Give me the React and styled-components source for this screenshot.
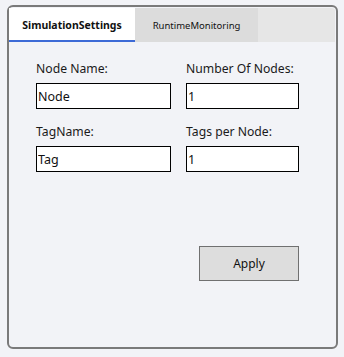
import React, { useState } from 'react';
import styled, { createGlobalStyle } from 'styled-components';

const Global = createGlobalStyle`
  html, body {
    margin: 0;
    padding: 0;
    background: #f2f3f7;
  }
  body {
    font-family: 'Noto Sans', 'Open Sans', sans-serif;
  }
`;

const tabs = ['SimulationSettings', 'RuntimeMonitoring'];

export default function App() {
  const [active, setActive] = useState(0);
  const [form, setForm] = useState({
    nodeName: 'Node',
    nodeCount: '1',
    tagName: 'Tag',
    tagsPerNode: '1',
  });

  const handleChange = (key) => (e) => {
    setForm({ ...form, [key]: e.target.value });
  };

  return (
    <>
      <Global />
      <FRAME>
        <TAB_STRIP>
          {tabs.map((t, i) => (
            <TAB key={t} $active={i === active} onClick={() => setActive(i)}>
              {t}
            </TAB>
          ))}
        </TAB_STRIP>
        <BODY>
          <FIELDS>
            <FIELD>
              <LABEL>Node Name:</LABEL>
              <INPUT value={form.nodeName} onChange={handleChange('nodeName')} />
            </FIELD>
            <FIELD>
              <LABEL>Number Of Nodes:</LABEL>
              <INPUT value={form.nodeCount} onChange={handleChange('nodeCount')} />
            </FIELD>
            <FIELD>
              <LABEL>TagName:</LABEL>
              <INPUT value={form.tagName} onChange={handleChange('tagName')} />
            </FIELD>
            <FIELD>
              <LABEL>Tags per Node:</LABEL>
              <INPUT value={form.tagsPerNode} onChange={handleChange('tagsPerNode')} />
            </FIELD>
          </FIELDS>
          <ACTIONS>
            <BUTTON>Apply</BUTTON>
          </ACTIONS>
        </BODY>
      </FRAME>
    </>
  );
}

const FRAME = styled.div`
  box-sizing: border-box;
  margin: 5px 0 0 7px;
  width: 331px;
  height: 344px;
  border: 2px solid #7a7a7a;
  border-radius: 6px;
  padding: 1px 1px 0 0;
  display: flex;
  flex-direction: column;
`;

const TAB_STRIP = styled.div`
  display: flex;
  height: 34px;
  background: #e6e6e6;
  border-top-right-radius: 3px;
`;

const TAB = styled.div`
  box-sizing: border-box;
  width: ${(p) => (p.$active ? '126px' : '123px')};
  display: flex;
  align-items: center;
  justify-content: center;
  font-size: ${(p) => (p.$active ? '10.5px' : '9.5px')};
  font-weight: ${(p) => (p.$active ? 700 : 400)};
  color: #111;
  background: ${(p) => (p.$active ? '#ffffff' : '#dcdcdc')};
  border-bottom: 2px solid ${(p) => (p.$active ? '#3d6ad6' : 'transparent')};
  padding-top: 2px;
  cursor: pointer;
`;

const BODY = styled.div`
  flex: 1;
  padding: 18px 0 0 27px;
  display: flex;
  flex-direction: column;
`;

const FIELDS = styled.div`
  display: grid;
  grid-template-columns: 135px 113px;
  column-gap: 15px;
  row-gap: 14px;
`;

const FIELD = styled.div`
  display: flex;
  flex-direction: column;
  gap: 6px;
`;

const LABEL = styled.div`
  font-size: 12.2px;
  line-height: 17px;
  white-space: nowrap;
  color: #1a1a1a;
`;

const INPUT = styled.input`
  box-sizing: border-box;
  height: 26px;
  width: 100%;
  border: 1px solid #000;
  background: #fff;
  padding: 0 1px;
  font-family: 'Noto Sans', 'Open Sans', sans-serif;
  font-size: 12.5px;
  color: #111;
  outline: none;
`;

const ACTIONS = styled.div`
  width: 263px;
  display: flex;
  justify-content: flex-end;
  margin-top: 74px;
`;

const BUTTON = styled.button`
  box-sizing: border-box;
  width: 100px;
  height: 35px;
  background: #dddddd;
  border: 1px solid #707070;
  font-family: 'Noto Sans', 'Open Sans', sans-serif;
  font-size: 12px;
  color: #111;
  cursor: pointer;
`;
